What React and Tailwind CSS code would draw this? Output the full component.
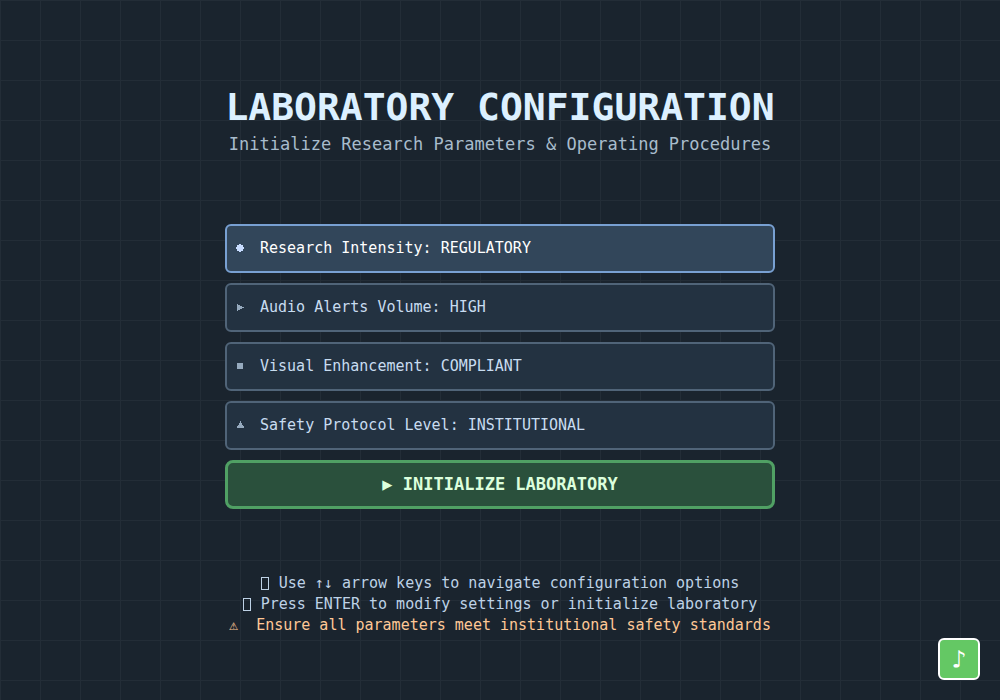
import { useState } from "react";

const OPTIONS = [
  { label: "Research Intensity", values: ["REGULATORY", "STANDARD"], icon: "octagon" },
  { label: "Audio Alerts Volume", values: ["HIGH", "LOW"], icon: "play" },
  { label: "Visual Enhancement", values: ["COMPLIANT", "STANDARD"], icon: "square" },
  { label: "Safety Protocol Level", values: ["INSTITUTIONAL", "STANDARD"], icon: "triangle" },
];

const SHAPES = {
  octagon: "M3 0H5V1H7V3H8V5H7V7H5V8H3V7H1V5H0V3H1V1H3Z",
  play: "M1 1H2V2H4V3H6V4H8V5H6V6H4V7H2V8H1Z",
  square: "M1 1H7V7H1Z",
  triangle: "M4 0H5V2H6V4H7V5H8V7H1V5H2V4H3V2H4Z",
};

function OptionRow({ option, value, active, onSelect }) {
  const tone = active
    ? "border-[#78a0d2] bg-[#32465a] text-white"
    : "border-[#506478] bg-[#233241] text-[#c8dcf0]";
  return (
    <button
      type="button"
      onClick={onSelect}
      className={`flex h-[49px] w-full items-center gap-4 rounded-md border-2 pr-4 pl-[9px] text-left text-[15px] ${tone}`}
    >
      <svg
        viewBox="0 0 8 9"
        shapeRendering="crispEdges"
        aria-hidden="true"
        className={active ? "h-[9px] w-2 fill-[#c8dcff]" : "h-[9px] w-2 fill-[#96aabe]"}
      >
        <path d={SHAPES[option.icon]} />
      </svg>
      <span>
        {option.label}: {value}
      </span>
    </button>
  );
}

function Box() {
  return (
    <span
      aria-hidden="true"
      className="mr-px inline-block h-[13px] w-2 border border-current align-middle"
    />
  );
}

export default function App() {
  const [selected, setSelected] = useState(0);
  const [indices, setIndices] = useState([0, 0, 0, 0]);

  const choose = (i) => {
    setSelected(i);
    setIndices(indices.map((n, k) => (k === i ? (n + 1) % OPTIONS[i].values.length : n)));
  };

  return (
    <div className="relative min-h-screen bg-[#1a242e] bg-[linear-gradient(to_right,#232d37_1px,transparent_1px),linear-gradient(to_bottom,#232d37_1px,transparent_1px)] bg-[size:40px_40px] font-['DejaVu_Sans_Mono',monospace]">
      <main className="mx-auto flex max-w-[550px] flex-col pt-[82px]">
        <header className="flex flex-col items-center whitespace-nowrap">
          <h1 className="text-[38px] leading-[50px] font-bold text-[#dcf0ff]">
            LABORATORY CONFIGURATION
          </h1>
          <p className="text-[17px] leading-6 text-[#a8bccc]">
            Initialize Research Parameters &amp; Operating Procedures
          </p>
        </header>

        <div className="mt-[68px] flex flex-col gap-[10px]">
          {OPTIONS.map((option, i) => (
            <OptionRow
              key={option.label}
              option={option}
              value={option.values[indices[i]]}
              active={selected === i}
              onSelect={() => choose(i)}
            />
          ))}
          <button
            type="button"
            className="h-[49px] w-full rounded-lg border-3 border-[#50a064] bg-[#2a503c] text-[17px] font-bold text-[#dcffdc]"
          >
            ▶ INITIALIZE LABORATORY
          </button>
        </div>

        <footer className="mt-16 pb-8 text-center text-[15px] leading-[21px] whitespace-pre text-[#bed2e6]">
          <p><Box /> Use ↑↓ arrow keys to navigate configuration options</p>
          <p><Box /> Press ENTER to modify settings or initialize laboratory</p>
          <p className="text-[#ffc896]">{"⚠  Ensure all parameters meet institutional safety standards"}</p>
        </footer>
      </main>

      <button
        type="button"
        aria-label="Toggle music"
        className="fixed right-5 bottom-5 flex size-[42px] items-center justify-center rounded-md border-2 border-white bg-[#64c864] text-[25px] leading-none text-white"
      >
        ♪
      </button>
    </div>
  );
}
